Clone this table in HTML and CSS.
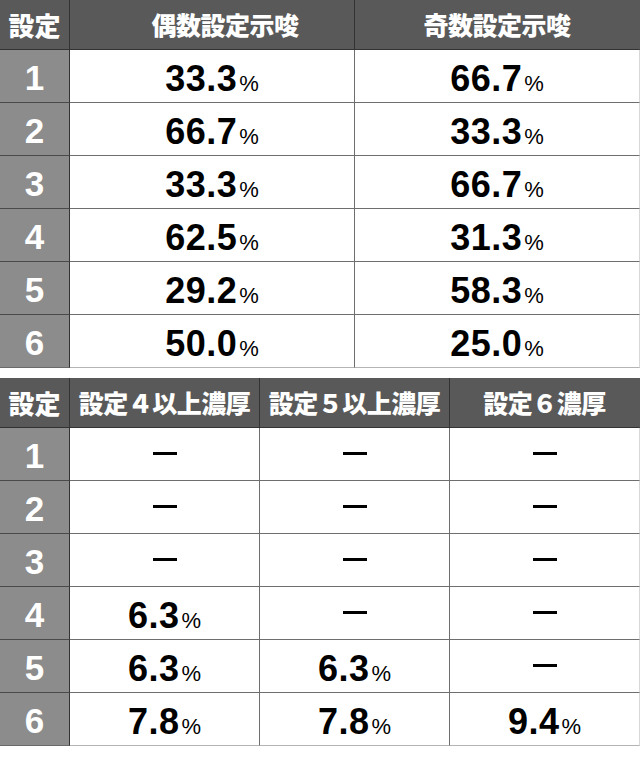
FILE: index.html
```html
<!DOCTYPE html>
<html lang="ja">
<head>
<meta charset="utf-8">
<link rel="stylesheet" href="styles.css">
</head>
<body>
<div class="page">
  <div class="grid t1">
    <div class="cell hd lab">設定</div>
    <div class="cell hd shift">偶数設定示唆</div>
    <div class="cell hd end">奇数設定示唆</div>

    <div class="cell rl">1</div>
    <div class="cell dv"><span class="v"><b>33.3</b><small>%</small></span></div>
    <div class="cell dv end"><span class="v"><b>66.7</b><small>%</small></span></div>

    <div class="cell rl">2</div>
    <div class="cell dv"><span class="v"><b>66.7</b><small>%</small></span></div>
    <div class="cell dv end"><span class="v"><b>33.3</b><small>%</small></span></div>

    <div class="cell rl">3</div>
    <div class="cell dv"><span class="v"><b>33.3</b><small>%</small></span></div>
    <div class="cell dv end"><span class="v"><b>66.7</b><small>%</small></span></div>

    <div class="cell rl">4</div>
    <div class="cell dv"><span class="v"><b>62.5</b><small>%</small></span></div>
    <div class="cell dv end"><span class="v"><b>31.3</b><small>%</small></span></div>

    <div class="cell rl">5</div>
    <div class="cell dv"><span class="v"><b>29.2</b><small>%</small></span></div>
    <div class="cell dv end"><span class="v"><b>58.3</b><small>%</small></span></div>

    <div class="cell rl last">6</div>
    <div class="cell dv last"><span class="v"><b>50.0</b><small>%</small></span></div>
    <div class="cell dv end last"><span class="v"><b>25.0</b><small>%</small></span></div>
  </div>

  <div class="grid t2">
    <div class="cell hd lab">設定</div>
    <div class="cell hd">設定４以上濃厚</div>
    <div class="cell hd">設定５以上濃厚</div>
    <div class="cell hd end">設定６濃厚</div>

    <div class="cell rl">1</div>
    <div class="cell dv"><span class="dash"></span></div>
    <div class="cell dv"><span class="dash"></span></div>
    <div class="cell dv end"><span class="dash"></span></div>

    <div class="cell rl">2</div>
    <div class="cell dv"><span class="dash"></span></div>
    <div class="cell dv"><span class="dash"></span></div>
    <div class="cell dv end"><span class="dash"></span></div>

    <div class="cell rl">3</div>
    <div class="cell dv"><span class="dash"></span></div>
    <div class="cell dv"><span class="dash"></span></div>
    <div class="cell dv end"><span class="dash"></span></div>

    <div class="cell rl">4</div>
    <div class="cell dv"><span class="v"><b>6.3</b><small>%</small></span></div>
    <div class="cell dv"><span class="dash"></span></div>
    <div class="cell dv end"><span class="dash"></span></div>

    <div class="cell rl">5</div>
    <div class="cell dv"><span class="v"><b>6.3</b><small>%</small></span></div>
    <div class="cell dv"><span class="v"><b>6.3</b><small>%</small></span></div>
    <div class="cell dv end"><span class="dash"></span></div>

    <div class="cell rl last">6</div>
    <div class="cell dv last"><span class="v"><b>7.8</b><small>%</small></span></div>
    <div class="cell dv last"><span class="v"><b>7.8</b><small>%</small></span></div>
    <div class="cell dv end last"><span class="v"><b>9.4</b><small>%</small></span></div>
  </div>
</div>
</body>
</html>
```

FILE: styles.css
```css
html, body {
  margin: 0;
  padding: 0;
  background: #ffffff;
}

.page {
  width: 640px;
  display: flex;
  flex-direction: column;
  gap: 10px;
}

.grid {
  display: grid;
  grid-template-rows: 50px repeat(6, 53px);
}

.t1 {
  grid-template-columns: 70px 285px 285px;
}

.t2 {
  grid-template-columns: 70px 190px 190px 190px;
}

.cell {
  box-sizing: border-box;
  display: flex;
  align-items: center;
  justify-content: center;
  border-right: 1px solid #6e6e6e;
  border-bottom: 1px solid #6e6e6e;
}

.cell.end {
  border-right: 1px solid #d8d8d8;
}

.hd {
  background: #595959;
  color: #ffffff;
  font-family: "Noto Sans CJK JP", sans-serif;
  font-weight: 900;
  font-size: 25px;
  line-height: 1;
  border-right-color: #333333;
  border-bottom-color: #333333;
  letter-spacing: -0.5px;
}

.hd.end {
  border-right-color: #595959;
}

.hd.lab {
  font-size: 26px;
  letter-spacing: 0;
}

.hd.shift {
  padding-left: 26px;
}

.rl {
  background: #8c8c8c;
  color: #ffffff;
  font-family: "Liberation Sans", Arial, sans-serif;
  font-weight: 700;
  font-size: 35px;
  padding-top: 4px;
  border-right-color: #333333;
  border-bottom-color: #4a4a4a;
}

.dv {
  background: #ffffff;
  padding-top: 5px;
}

.last {
  border-bottom-color: #b4b4b4;
}

.rl.last {
  border-bottom-color: #6a6a6a;
}

.v {
  font-family: "Liberation Sans", Arial, sans-serif;
  color: #000000;
  white-space: nowrap;
}

.v b {
  font-weight: 700;
  font-size: 36px;
  letter-spacing: 0.5px;
}

.v small {
  font-weight: 400;
  font-size: 22px;
  margin-left: 2px;
}

.dash {
  display: block;
  width: 24px;
  height: 3px;
  background: #000000;
  margin-top: -6px;
}
```
